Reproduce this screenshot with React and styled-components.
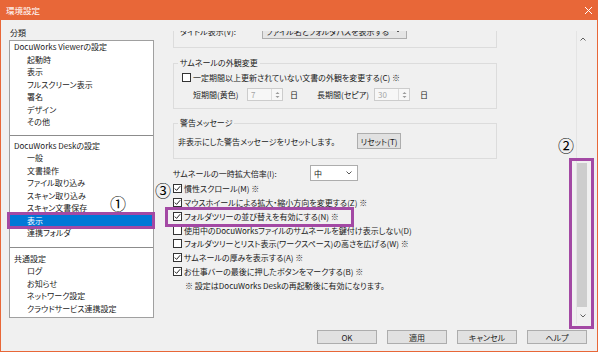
import React from 'react';
import styled, { createGlobalStyle } from 'styled-components';

const ORANGE = '#E86738';
const MARK = '#A349A4';

const GlobalStyle = createGlobalStyle`
  html, body { margin: 0; padding: 0; background: #ffffff; }
  body {
    font-family: "Noto Sans CJK JP", "Noto Sans", sans-serif;
    font-size: 8px;
    color: #1a1a1a;
    font-feature-settings: "palt";
  }
`;

const Window = styled.div`
  position: relative;
  width: 598px;
  height: 352px;
  box-sizing: border-box;
  border: 1px solid ${ORANGE};
  border-top: none;
  background: #f0f0f0;
  display: flex;
  flex-direction: column;
  overflow: hidden;
`;

const TitleBar = styled.div`
  flex: none;
  height: 20px;
  background: ${ORANGE};
  display: flex;
  align-items: center;
  justify-content: space-between;
  padding: 0 4px 0 5px;
  color: #fff;
  font-size: 8.5px;
`;

const Body = styled.div`
  flex: 1;
  display: flex;
  min-height: 0;
`;

const LeftPane = styled.div`
  flex: none;
  width: 164px;
  box-sizing: border-box;
  padding: 8px 0 0 8px;
`;

const PaneLabel = styled.div`
  height: 10px;
  line-height: 10px;
  padding-left: 1px;
  margin-bottom: 2px;
`;

const ListBox = styled.div`
  width: 145px;
  height: 278px;
  box-sizing: border-box;
  border: 1px solid #a0a0a0;
  background: #fff;
`;

const Section = styled.div`
  padding: ${p => p.$top}px 0 ${p => p.$bottom}px;
  border-bottom: ${p => (p.$last ? 'none' : '1px solid #8c8c8c')};
`;

const Item = styled.div`
  height: 12.5px;
  line-height: 12.5px;
  padding-left: ${p => (p.$head ? 4 : 17)}px;
  white-space: nowrap;
  background: ${p => (p.$selected ? '#0078d7' : 'transparent')};
  color: ${p => (p.$selected ? '#fff' : 'inherit')};
`;

const RightPane = styled.div`
  flex: 1;
  display: flex;
  flex-direction: column;
  min-width: 0;
`;

const ScrollArea = styled.div`
  margin-top: 11px;
  height: 293px;
  display: flex;
`;

const Viewport = styled.div`
  flex: 1;
  overflow: hidden;
  padding-left: 8px;
`;

const Content = styled.div`
  margin-top: -13px;
  width: 324px;
`;

const PlainBox = styled.div`
  box-sizing: border-box;
  border: 1px solid #dcdcdc;
  padding: 4px 0 8px 6px;
`;

const Group = styled.fieldset`
  margin: ${p => p.$gap}px 0 0;
  padding: ${p => p.$pt}px 0 ${p => p.$pb}px;
  border: 1px solid #dcdcdc;
  min-width: 0;
`;

const Legend = styled.legend`
  margin-left: 4px;
  padding: 0 2px;
  line-height: 10px;
  font-size: 8px;
`;

const Row = styled.div`
  display: flex;
  align-items: center;
  height: ${p => p.$h || 12}px;
  margin-top: ${p => p.$mt || 0}px;
  padding-left: ${p => p.$pl || 0}px;
  white-space: nowrap;
`;

const FixedLabel = styled.span`
  flex: none;
  width: ${p => p.$w}px;
  margin-left: ${p => p.$ml || 0}px;
  white-space: nowrap;
`;

const Combo = styled.div`
  flex: none;
  box-sizing: border-box;
  width: ${p => p.$w}px;
  height: 16px;
  border: 1px solid #adadad;
  background: ${p => (p.$flat ? '#e5e5e5' : '#ffffff')};
  display: flex;
  align-items: center;
  justify-content: space-between;
  padding: 0 5px 0 3px;
  overflow: hidden;
`;

const Spin = styled.div`
  flex: none;
  box-sizing: border-box;
  width: 36px;
  height: 13px;
  border: 1px solid #cccccc;
  background: #f7f7f7;
  display: flex;
  align-items: center;
  justify-content: space-between;
  padding-left: 3px;
  color: #a6a6a6;
`;

const SpinButtons = styled.div`
  width: 10px;
  height: 100%;
  border-left: 1px solid #dcdcdc;
  display: flex;
  align-items: center;
  justify-content: center;
`;

const Day = styled.span`
  margin-left: ${p => p.$ml}px;
`;

const PushButton = styled.div`
  flex: none;
  box-sizing: border-box;
  width: ${p => p.$w}px;
  height: ${p => p.$h}px;
  border: 1px solid #adadad;
  background: #e1e1e1;
  display: flex;
  align-items: center;
  justify-content: center;
  white-space: nowrap;
`;

const CheckRows = styled.div`
  margin-top: 1px;
`;

const CheckRow = styled.div`
  display: flex;
  align-items: center;
  height: 13.75px;
  padding-left: ${p => p.$pl || 0}px;
  white-space: nowrap;
`;

const Box = styled.span`
  flex: none;
  box-sizing: border-box;
  width: 9px;
  height: 9px;
  border: 1px solid #333;
  background: #fff;
  margin-right: 2px;
  display: flex;
  align-items: center;
  justify-content: center;
`;

const ScrollBar = styled.div`
  flex: none;
  width: 12px;
  margin-right: 9px;
  display: flex;
  flex-direction: column;
  background: #f0f0f0;
  border-left: 1px solid #e4e4e4;
  box-sizing: border-box;
`;

const ScrollArrow = styled.div`
  flex: none;
  height: 16px;
  display: flex;
  align-items: center;
  justify-content: center;
`;

const Track = styled.div`
  flex: 1;
  padding-top: 116px;
`;

const Thumb = styled.div`
  width: 10px;
  height: 144px;
  background: #cdcdcd;
`;

const ButtonRow = styled.div`
  margin-top: 6px;
  display: flex;
  justify-content: flex-end;
  gap: 10px;
  padding-right: 10px;
`;

const Highlight = styled.div`
  position: absolute;
  box-sizing: border-box;
  border: 3px solid ${MARK};
  left: ${p => p.$x}px;
  top: ${p => p.$y}px;
  width: ${p => p.$w}px;
  height: ${p => p.$h}px;
  pointer-events: none;
`;

const Callout = styled.div`
  position: absolute;
  left: ${p => p.$x}px;
  top: ${p => p.$y}px;
  font-size: 16px;
  line-height: 16px;
  color: #000;
`;

const Check = ({ on }) => (
  <Box>
    {on && (
      <svg width="7" height="7" viewBox="0 0 7 7">
        <polyline points="0.8,3.6 2.6,5.4 6.2,1.2" fill="none" stroke="#222" strokeWidth="1" />
      </svg>
    )}
  </Box>
);

const Chevron = ({ up, color = '#555' }) => (
  <svg width="6" height="4" viewBox="0 0 6 4">
    <polyline points={up ? '0.5,3.5 3,1 5.5,3.5' : '0.5,0.5 3,3 5.5,0.5'} fill="none" stroke={color} strokeWidth="1" />
  </svg>
);

const SpinArrows = () => (
  <svg width="5" height="8" viewBox="0 0 5 8">
    <polygon points="0.5,3 2.5,1 4.5,3" fill="#9a9a9a" />
    <polygon points="0.5,5 2.5,7 4.5,5" fill="#9a9a9a" />
  </svg>
);

const CloseIcon = () => (
  <svg width="9" height="9" viewBox="0 0 9 9">
    <path d="M1 1 L8 8 M8 1 L1 8" stroke="#fff" strokeWidth="1" />
  </svg>
);

const categories = [
  {
    top: 0,
    bottom: 6,
    head: 'DocuWorks Viewerの設定',
    items: ['起動時', '表示', 'フルスクリーン表示', '署名', 'デザイン', 'その他'],
  },
  {
    top: 4,
    bottom: 7,
    head: 'DocuWorks Deskの設定',
    items: ['一般', '文書操作', 'ファイル取り込み', 'スキャン取り込み', 'スキャン文書保存', '表示', '連携フォルダ'],
    selected: 5,
  },
  {
    top: 5,
    bottom: 0,
    head: '共通設定',
    items: ['ログ', 'お知らせ', 'ネットワーク設定', 'クラウドサービス連携設定'],
  },
];

const options = [
  { label: '慣性スクロール(M) ※', on: true },
  { label: 'マウスホイールによる拡大・縮小方向を変更する(Z) ※', on: true },
  { label: 'フォルダツリーの並び替えを有効にする(N) ※', on: true },
  { label: '使用中のDocuWorksファイルのサムネールを鍵付け表示しない(D)', on: false },
  { label: 'フォルダツリーとリスト表示(ワークスペース)の高さを広げる(W) ※', on: false },
  { label: 'サムネールの厚みを表示する(A) ※', on: true },
  { label: 'お仕事バーの最後に押したボタンをマークする(B) ※', on: true },
];

export default function App() {
  return (
    <>
      <GlobalStyle />
      <Window>
        <TitleBar>
          <span>環境設定</span>
          <CloseIcon />
        </TitleBar>
        <Body>
          <LeftPane>
            <PaneLabel>分類</PaneLabel>
            <ListBox>
              {categories.map((c, i) => (
                <Section key={c.head} $top={c.top} $bottom={c.bottom} $last={i === categories.length - 1}>
                  <Item $head>{c.head}</Item>
                  {c.items.map((it, j) => (
                    <Item key={it} $selected={c.selected === j}>{it}</Item>
                  ))}
                </Section>
              ))}
            </ListBox>
          </LeftPane>

          <RightPane>
            <ScrollArea>
              <Viewport>
                <Content>
                  <PlainBox>
                    <Row $h={16}>
                      <FixedLabel $w={82}>タイトル表示(V):</FixedLabel>
                      <Combo $w={145} $flat>
                        <span>ファイル名とフォルダパスを表示する</span>
                        <Chevron />
                      </Combo>
                    </Row>
                  </PlainBox>

                  <Group $gap={10} $pt={3} $pb={7}>
                    <Legend>サムネールの外観変更</Legend>
                    <Row $pl={8}>
                      <Check on={false} />
                      一定期間以上更新されていない文書の外観を変更する(C) ※
                    </Row>
                    <Row $h={13} $mt={5} $pl={19}>
                      <FixedLabel $w={54}>短期間(黄色)</FixedLabel>
                      <Spin>
                        7
                        <SpinButtons><SpinArrows /></SpinButtons>
                      </Spin>
                      <Day $ml={7}>日</Day>
                      <FixedLabel $w={57} $ml={19}>長期間(セピア)</FixedLabel>
                      <Spin>
                        30
                        <SpinButtons><SpinArrows /></SpinButtons>
                      </Spin>
                      <Day $ml={10}>日</Day>
                    </Row>
                  </Group>

                  <Group $gap={9} $pt={5} $pb={9}>
                    <Legend>警告メッセージ</Legend>
                    <Row $h={16} $pl={4}>
                      <FixedLabel $w={179}>非表示にした警告メッセージをリセットします。</FixedLabel>
                      <PushButton $w={44} $h={16}>リセット(T)</PushButton>
                    </Row>
                  </Group>

                  <Row $h={16} $mt={6}>
                    <FixedLabel $w={137}>サムネールの一時拡大倍率(I):</FixedLabel>
                    <Combo $w={48}>
                      <span>中</span>
                      <Chevron />
                    </Combo>
                  </Row>

                  <CheckRows>
                    {options.map(o => (
                      <CheckRow key={o.label}>
                        <Check on={o.on} />
                        {o.label}
                      </CheckRow>
                    ))}
                    <CheckRow $pl={12}>※ 設定はDocuWorks Deskの再起動後に有効になります。</CheckRow>
                  </CheckRows>
                </Content>
              </Viewport>
              <ScrollBar>
                <ScrollArrow><Chevron up color="#606060" /></ScrollArrow>
                <Track><Thumb /></Track>
                <ScrollArrow><Chevron color="#606060" /></ScrollArrow>
              </ScrollBar>
            </ScrollArea>

            <ButtonRow>
              <PushButton $w={60} $h={14}>OK</PushButton>
              <PushButton $w={60} $h={14}>適用</PushButton>
              <PushButton $w={60} $h={14}>キャンセル</PushButton>
              <PushButton $w={60} $h={14}>ヘルプ</PushButton>
            </ButtonRow>
          </RightPane>
        </Body>

        <Highlight $x={6} $y={212} $w={148} $h={17} />
        <Highlight $x={568} $y={158} $w={25} $h={171} />
        <Highlight $x={164} $y={207} $w={189} $h={20} />
        <Callout $x={109} $y={195}>①</Callout>
        <Callout $x={557} $y={137}>②</Callout>
        <Callout $x={154} $y={182}>③</Callout>
      </Window>
    </>
  );
}
